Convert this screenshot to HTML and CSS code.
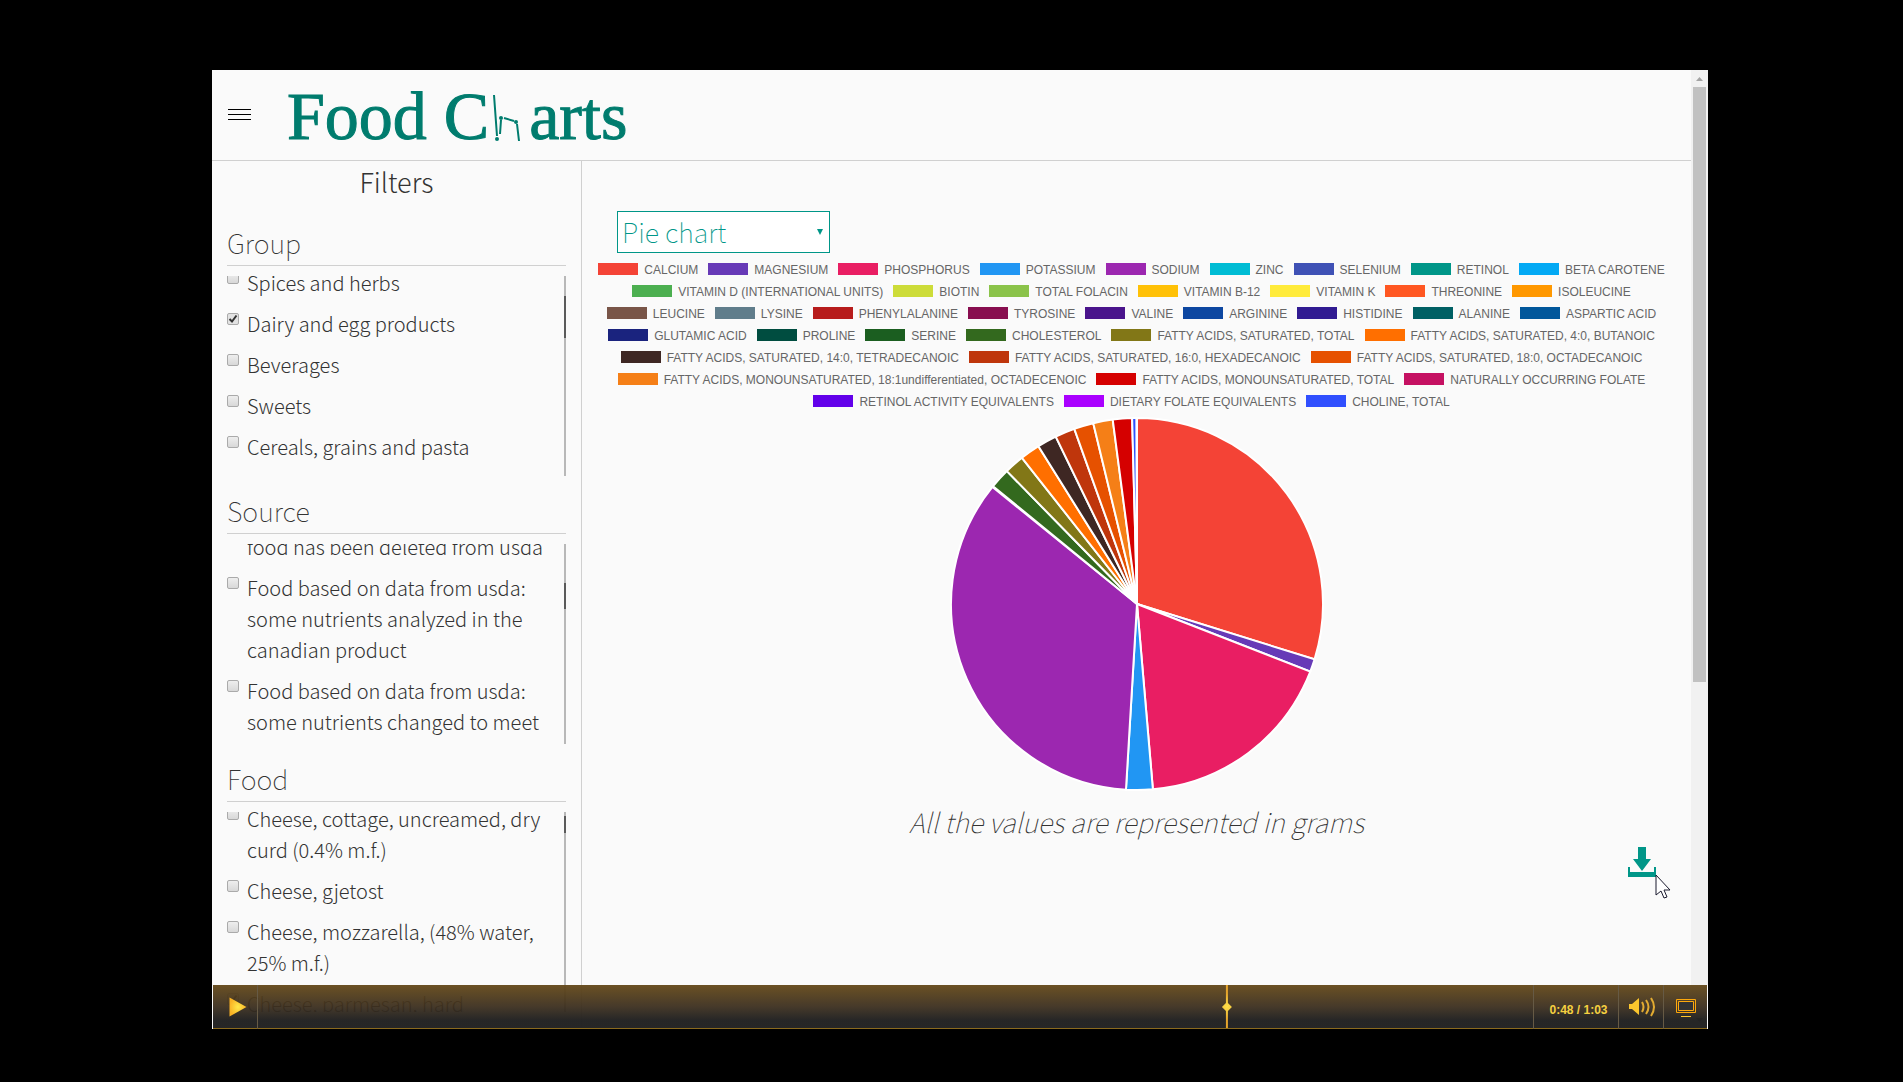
FILE: index.html
```html
<!DOCTYPE html>
<html lang="en">
<head>
<meta charset="utf-8">
<title>Food Charts</title>
<link rel="stylesheet" href="styles.css">
</head>
<body>
<div class="player">
  <div class="page">
    <header class="header">
      <button class="menu" aria-label="Menu"><span></span><span></span><span></span></button>
      <h1 class="logo" aria-label="Food Charts">
        <span>Food C</span>
        <svg class="logo-h" width="30" height="48" viewBox="0 0 30 48" fill="none" stroke="#007c6e" stroke-width="2" aria-hidden="true">
          <path d="M3 1L6 42M9 40L10 26M13 24L23 27M26 30L28 47"/>
          <g fill="#007c6e" stroke="none"><circle cx="6" cy="45" r="2"/><circle cx="10" cy="24" r="2"/><circle cx="25" cy="28" r="2"/></g>
        </svg>
        <span>arts</span>
      </h1>
    </header>
    <div class="columns">
      <aside class="filters">
        <h2 class="filters-title">Filters</h2>
        <section class="filter">
          <h3>Group</h3>
          <div class="scroller group-scroll">
            <ul>
              <li><label><input type="checkbox"><span>Spices and herbs</span></label></li>
              <li><label><input type="checkbox" checked><span>Dairy and egg products</span></label></li>
              <li><label><input type="checkbox"><span>Beverages</span></label></li>
              <li><label><input type="checkbox"><span>Sweets</span></label></li>
              <li><label><input type="checkbox"><span>Cereals, grains and pasta</span></label></li>
            </ul>
            <div class="track"><div class="thumb"></div></div>
          </div>
        </section>
        <section class="filter">
          <h3>Source</h3>
          <div class="scroller source-scroll">
            <ul>
              <li class="continued"><label><input type="checkbox"><span>food has been deleted from usda</span></label></li>
              <li><label><input type="checkbox"><span>Food based on data from usda: some nutrients analyzed in the canadian product</span></label></li>
              <li><label><input type="checkbox"><span>Food based on data from usda: some nutrients changed to meet</span></label></li>
            </ul>
            <div class="track"><div class="thumb"></div></div>
          </div>
        </section>
        <section class="filter">
          <h3>Food</h3>
          <div class="scroller food-scroll">
            <ul>
              <li><label><input type="checkbox"><span>Cheese, cottage, uncreamed, dry curd (0.4% m.f.)</span></label></li>
              <li><label><input type="checkbox"><span>Cheese, gjetost</span></label></li>
              <li><label><input type="checkbox"><span>Cheese, mozzarella, (48% water, 25% m.f.)</span></label></li>
              <li><label><input type="checkbox" checked><span>Cheese, parmesan, hard</span></label></li>
            </ul>
            <div class="track"><div class="thumb"></div></div>
          </div>
        </section>
      </aside>
      <main class="chart">
        <select class="chart-type" aria-label="Chart type"><option>Pie chart</option></select>
        <ul class="legend" id="legend"></ul>
        <svg class="pie" id="pie" viewBox="-187 -187 374 374" role="img" aria-label="Pie chart of nutrients"></svg>
        <p class="caption">All the values are represented in grams</p>
        <a class="download" href="#download" aria-label="Download">
          <svg width="28" height="30" viewBox="0 0 28 30" fill="#009688"><path d="M10 0h8v12h5l-9 12L5 12h5zM0 20h2v5h24v-5h2v10H0z"/></svg>
        </a>
      </main>
    </div>
  </div>
  <div class="page-scroll">
    <svg width="17" height="17" viewBox="0 0 17 17"><path d="M5 11h7L8.500 7z" fill="#a3a3a3"/></svg>
    <div class="page-thumb"></div>
    <svg class="down" width="17" height="17" viewBox="0 0 17 17"><path d="M5 6h7l-3.500 4z" fill="#505050"/></svg>
  </div>
  <svg class="cursor" width="16" height="25" viewBox="0 0 16 25"><path d="M1 1v20l5-4 3 7 3-1-3-7h6z" fill="#fff" stroke="#1a1a2e"/></svg>
  <div class="controls">
    <button class="play" aria-label="Play">
      <svg width="18" height="20" viewBox="0 0 18 20"><defs><radialGradient id="gold"><stop offset="0" stop-color="#ffe84a"/><stop offset="1" stop-color="#f9b224"/></radialGradient></defs><path d="M.5.5v19L17.500 10z" fill="url(#gold)"/></svg>
    </button>
    <input class="seek" type="range" min="0" max="1000" value="762" aria-label="Seek">
    <div class="time">0:48 / 1:03</div>
    <button class="volume" aria-label="Volume">
      <svg width="27" height="20" viewBox="0 0 27 20"><path d="M0 7h3l7-6v17l-7-6H0z" fill="#fcc62d"/><g fill="none" stroke="#e3ab31" stroke-width="2"><path d="M13 5q3 5 0 10"/><path d="M17 3q5 7 0 14"/><path d="M22 1q6 9 0 18"/></g></svg>
    </button>
    <button class="fullscreen" aria-label="Full screen">
      <svg width="20" height="19" viewBox="0 0 20 19"><g fill="none" stroke="#fda80c"><path d="M.5.5h19v13H.5z"/><path d="M2.500 2.500h15v9h-15z" fill="#333"/></g><path d="M5 17h10v1H5z" fill="#ffc52b"/></svg>
    </button>
  </div>
</div>
<script src="chart.js"></script>
</body>
</html>
```
FILE: styles.css
```css
* { box-sizing: border-box; }
body, h1, h2, h3, ul, p { margin: 0; padding: 0; font-weight: inherit; }
ul { list-style: none; }
button { border: 0; background: none; padding: 0; display: flex; align-items: center; justify-content: center; }

body {
  height: 100vh;
  display: flex;
  padding: 70px 195px 53px 212px;
  background: #000;
  color: #333;
  font-family: "Noto Sans CJK SC", sans-serif;
  font-weight: 300;
}
.player {
  position: relative;
  flex: 1;
  display: flex;
  overflow: hidden;
  background: #fafafa;
}
.page { flex: 1; min-width: 0; }

.header {
  display: flex;
  align-items: center;
  height: 91px;
  padding: 0 0 2px 16px;
  border-bottom: 1px solid #d0d0d0;
}
.menu { flex-direction: column; gap: 4px; width: 23px; margin-right: 36px; }
.menu span { width: 23px; height: 1px; background: #000; }
.logo {
  display: flex;
  align-items: center;
  padding-top: 4px;
  color: #007c6e;
  font: 68px/80px "Liberation Serif", serif;
  -webkit-text-stroke: 1px #007c6e;
}
.logo-h { margin: 4px 8px 0 2px; }

.columns { display: flex; }
.filters { width: 370px; flex: none; padding: 0 15px; border-right: 1px solid #d0d0d0; }
.filters-title { margin-bottom: 20px; text-align: center; font-size: 27px; line-height: 42px; }
.filter { margin-bottom: 15px; }
.filter h3 {
  margin-bottom: 10px;
  padding-bottom: 2px;
  border-bottom: 1px solid #d0d0d0;
  font-size: 27px;
  line-height: 40px;
  font-weight: 100;
}
.scroller { display: flex; height: 200px; overflow: hidden; font-size: 20px; line-height: 31px; }
.scroller ul { flex: 1; }
.scroller li { margin-bottom: 10px; }
.scroller label { display: flex; align-items: flex-start; gap: 8px; }
.scroller input {
  appearance: none;
  flex: none;
  width: 12px;
  height: 12px;
  margin: 5px 0 0;
  border: 1px solid #aaa;
  border-radius: 2px;
  background: linear-gradient(#eee, #d8d8d8);
}
.scroller input:checked {
  background: url("data:image/svg+xml,%3Csvg xmlns='http://www.w3.org/2000/svg' viewBox='0 0 10 10'%3E%3Cpath d='M1.500 5l2.500 2.500L8.500 1.500' fill='none' stroke='%23333' stroke-width='2'/%3E%3C/svg%3E") #e2e2e2;
}
.scroller .continued input { visibility: hidden; }
.group-scroll ul, .food-scroll ul { margin-top: -9px; }
.source-scroll ul { margin-top: -13px; }
.track { width: 2px; background: #b8b8b8; }
.thumb { background: #5a5a5a; }
.group-scroll .track { padding-top: 20px; }
.group-scroll .thumb { height: 42px; }
.source-scroll .track { padding-top: 39px; }
.source-scroll .thumb { height: 26px; }
.food-scroll .track { padding-top: 4px; }
.food-scroll .thumb { height: 17px; }

.chart { flex: 1; min-width: 0; padding: 50px 15px 0; display: flex; flex-direction: column; align-items: center; }
.chart-type {
  appearance: none;
  align-self: flex-start;
  width: 213px;
  height: 42px;
  margin-left: 20px;
  padding: 0 4px;
  border: 1px solid #009688;
  border-radius: 0;
  color: #009688;
  font: 100 27px/40px "Noto Sans CJK SC", sans-serif;
  background: url("data:image/svg+xml,%3Csvg xmlns='http://www.w3.org/2000/svg' width='6' height='6'%3E%3Cpath d='M0 0h6L3 6z' fill='%23009688'/%3E%3C/svg%3E") no-repeat right 6px top 17px #fff;
}
.legend {
  display: flex;
  flex-wrap: wrap;
  justify-content: center;
  row-gap: 8px;
  margin-top: 10px;
  color: #666;
  font: 12px/14px "Liberation Sans", sans-serif;
}
.legend li { display: flex; gap: 6px; margin-right: 10px; white-space: nowrap; }
.swatch { width: 40px; height: 12px; }
.pie { width: 374px; height: 374px; margin-top: 8px; }
.pie path { stroke: #fff; stroke-width: 2; }
.caption { margin-top: 11px; font-size: 27px; line-height: 40px; font-style: italic; font-weight: 100; }
.download { align-self: flex-end; margin: 5px 20px 0 0; display: flex; }

.page-scroll { width: 17px; display: flex; flex-direction: column; align-items: center; background: #f1f1f1; }
.page-thumb { width: 13px; flex: 0 0 62%; background: #c1c1c1; }
.down { margin-top: auto; }
.cursor { position: absolute; right: 37px; bottom: 130px; }

.controls {
  position: absolute;
  left: 0;
  right: 0;
  bottom: 0;
  display: flex;
  height: 44px;
  border: 1px solid #fafafa;
  border-width: 0 1px;
  background: linear-gradient(#654a1bf5, #3a2d1df0 50%, #222222fa 80%);
  box-shadow: inset 0 -1px #8a6a1e;
  color: #f5d040;
}
.play { width: 45px; padding-left: 5px; border-right: 1px solid #665a45; }
.seek { appearance: none; flex: 1; min-width: 0; height: 43px; margin: 0; background: none; }
.seek::-webkit-slider-thumb {
  appearance: none;
  width: 10px;
  height: 43px;
  background: radial-gradient(circle, #ffe04a, #e5a52c 60%);
  clip-path: polygon(4px 0, 6px 0, 6px 18px, 10px 22px, 6px 26px, 6px 43px, 4px 43px, 4px 26px, 0 22px, 4px 18px);
}
.time {
  width: 85px;
  padding: 4px 0 0 5px;
  text-align: center;
  font: bold 12px/43px "Liberation Sans", sans-serif;
}
.time, .volume, .fullscreen { border-left: 1px solid #665a45; }
.volume { width: 45px; padding-left: 3px; }
.fullscreen { width: 44px; padding-top: 3px; }
```
FILE: chart.js
```js
// Nutrient name, colour, start and end angle in degrees clockwise from the top.
const nutrients = [
  ["CALCIUM", "#f44336", 0, 107.3],
  ["MAGNESIUM", "#673ab7", 107.3, 111.3],
  ["PHOSPHORUS", "#e91e63", 111.3, 175.1],
  ["POTASSIUM", "#2196f3", 175.1, 183.4],
  ["SODIUM", "#9c27b0", 183.4, 309],
  ["ZINC", "#00bcd4"],
  ["SELENIUM", "#3f51b5"],
  ["RETINOL", "#009688"],
  ["BETA CAROTENE", "#03a9f4"],
  ["VITAMIN D (INTERNATIONAL UNITS)", "#4caf50"],
  ["BIOTIN", "#cddc39"],
  ["TOTAL FOLACIN", "#8bc34a"],
  ["VITAMIN B-12", "#ffc107"],
  ["VITAMIN K", "#ffeb3b"],
  ["THREONINE", "#ff5722"],
  ["ISOLEUCINE", "#ff9800"],
  ["LEUCINE", "#795548"],
  ["LYSINE", "#607d8b"],
  ["PHENYLALANINE", "#b71c1c"],
  ["TYROSINE", "#880e4f"],
  ["VALINE", "#4a148c"],
  ["ARGININE", "#0d47a1"],
  ["HISTIDINE", "#311b92"],
  ["ALANINE", "#006064"],
  ["ASPARTIC ACID", "#01579b"],
  ["GLUTAMIC ACID", "#1a237e"],
  ["PROLINE", "#004d40"],
  ["SERINE", "#1b5e20"],
  ["CHOLESTEROL", "#33691e", 309.3, 315.6],
  ["FATTY ACIDS, SATURATED, TOTAL", "#827717", 315.6, 321.8],
  ["FATTY ACIDS, SATURATED, 4:0, BUTANOIC", "#ff6f00", 321.8, 328],
  ["FATTY ACIDS, SATURATED, 14:0, TETRADECANOIC", "#3e2723", 328, 334.1],
  ["FATTY ACIDS, SATURATED, 16:0, HEXADECANOIC", "#bf360c", 334.1, 340.3],
  ["FATTY ACIDS, SATURATED, 18:0, OCTADECANOIC", "#e65100", 340.3, 346.4],
  ["FATTY ACIDS, MONOUNSATURATED, 18:1undifferentiated, OCTADECENOIC", "#f57f17", 346.4, 352.5],
  ["FATTY ACIDS, MONOUNSATURATED, TOTAL", "#d50000", 352.5, 358.5],
  ["NATURALLY OCCURRING FOLATE", "#c51162"],
  ["RETINOL ACTIVITY EQUIVALENTS", "#6200ea"],
  ["DIETARY FOLATE EQUIVALENTS", "#aa00ff"],
  ["CHOLINE, TOTAL", "#304ffe", 358.5, 359.8]
];
const radius = 186;
const point = deg => {
  const a = deg * Math.PI / 180;
  return (radius * Math.sin(a)).toFixed(2) + " " + (-radius * Math.cos(a)).toFixed(2);
};
let slices = "";
let items = "";
for (const [name, colour, start, end] of nutrients) {
  items += `<li><span class="swatch" style="background:${colour}"></span>${name}</li>`;
  if (end) slices += `<path fill="${colour}" d="M0 0L${point(start)}A${radius} ${radius} 0 0 1 ${point(end)}Z"/>`;
}
document.getElementById("legend").innerHTML = items;
document.getElementById("pie").innerHTML = slices;
```
